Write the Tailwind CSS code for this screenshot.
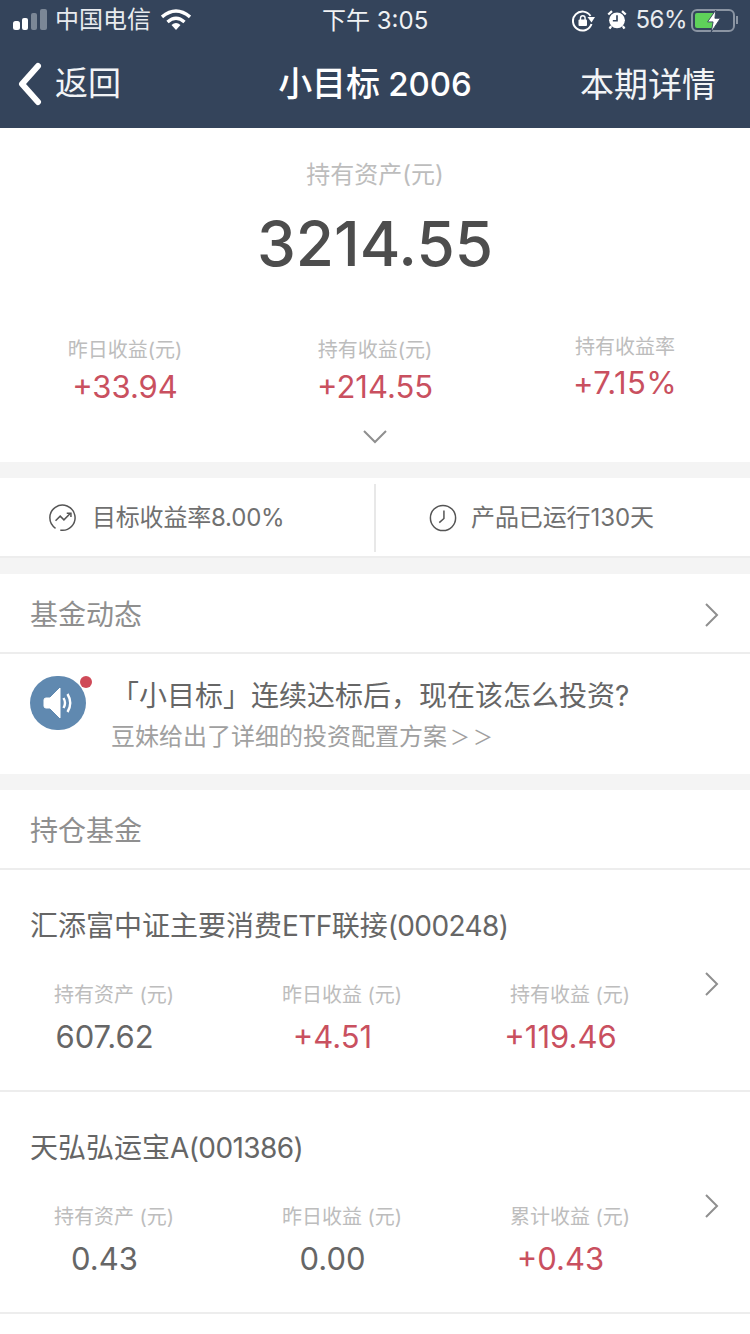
<!DOCTYPE html>
<html lang="zh">
<head>
<meta charset="utf-8">
<script src="https://cdn.jsdelivr.net/npm/@tailwindcss/browser@4"></script>
</head>
<body class="m-0 bg-white">
<div class="w-[750px] h-[1334px] overflow-hidden bg-white font-['Inter','Noto_Sans_CJK_SC',sans-serif]">
  <header class="h-[128px] bg-[#34445b] text-white flex flex-col">
    <div class="h-[40px] relative flex items-center justify-between pl-[13px] pr-[12px] text-[24px] text-[#e8ebef]">
      <div class="flex items-center">
        <svg width="34" height="22" viewBox="0 0 34 22" class="mr-[8px]">
          <rect x="0" y="12" width="7" height="9" rx="2.5" fill="#fff"/>
          <rect x="9" y="9" width="6" height="12" rx="2" fill="#fff"/>
          <rect x="18" y="4" width="6" height="17" rx="2" fill="#7b8796"/>
          <rect x="27" y="0" width="7" height="21" rx="2" fill="#7b8796"/>
        </svg>
        <span>中国电信</span>
        <svg width="30" height="22" viewBox="0 0 30 22" class="ml-[10px]" fill="none" stroke="#fff" stroke-width="3.4">
          <path d="M1 8 Q15 -4 29 8"/><path d="M6.5 13 Q15 5.5 23.5 13"/>
          <path d="M10.5 16 Q15 12 19.5 16 L15 21Z" fill="#fff" stroke="none"/>
        </svg>
      </div>
      <span class="absolute left-[322px] top-[3px] text-[24px] text-[#f0f2f4]">下午 3:05</span>
      <div class="flex items-center">
        <svg width="24" height="22" viewBox="0 0 24 22" fill="none" stroke="#fff" stroke-width="2" class="mr-[11px] mt-[2px]">
          <path d="M19.5 14 A9.5 9.5 0 1 1 18.5 6"/><path d="M15.5 7 L23 7 L19.5 12.5Z" fill="#fff" stroke="none"/>
          <rect x="6.5" y="9.5" width="8.5" height="6.5" rx="1" fill="#fff" stroke="none"/>
          <path d="M8.5 10 V8 a2.3 2.3 0 0 1 4.6 0 V10" stroke-width="1.4"/>
        </svg>
        <svg width="20" height="21" viewBox="0 0 24 24" class="mr-[8px] mt-[-2px]">
          <circle cx="12" cy="13" r="9.5" fill="#fff"/>
          <path d="M12 7 V13.5 H7" fill="none" stroke="#34445b" stroke-width="2"/>
          <path d="M1.5 6 L6 2 M22.5 6 L18 2 M5 20 L3 23 M19 20 L21 23" stroke="#fff" stroke-width="2.8"/>
        </svg>
        <span class="mr-[4px] tracking-[-0.5px]">56%</span>
        <div class="relative w-[44px] h-[23px] border-2 border-[#8b95a3] rounded-[6px] p-[2px]">
          <div class="w-[20px] h-full bg-[#5fd15a] rounded-[2px]"></div>
          <svg width="16" height="22" viewBox="0 0 16 24" class="absolute left-[13px] top-[-1px]"><path d="M10 0 L1 13 H7 L5 24 L15 9 H9Z" fill="#fff" stroke="#34445b" stroke-width="1"/></svg>
        </div>
        <div class="w-[2px] h-[8px] bg-[#8b95a3] ml-[1px]"></div>
      </div>
    </div>
    <div class="flex-1 relative flex items-center justify-between pl-[17px] pr-[34px]">
      <div class="flex items-center">
        <svg width="26" height="44" viewBox="0 0 26 44" fill="none" stroke="#fff" stroke-width="6" stroke-linecap="round" stroke-linejoin="round"><path d="M21 4 L5 22 L21 40"/></svg>
        <span class="text-[33px] ml-[12px] text-[#f2f4f6]">返回</span>
      </div>
      <span class="absolute left-0 right-0 text-center text-[34px] font-medium">小目标<span class="text-[33px] ml-[8px]">2006</span></span>
      <span class="text-[34px] text-[#f2f4f6]">本期详情</span>
    </div>
  </header>

  <section class="h-[334px] flex flex-col items-center">
    <div class="mt-[29px] text-[24px] leading-[36px] text-[#bdbdbd]">持有资产(元)</div>
    <div class="mt-[11px] text-[62px] leading-[80px] font-medium text-[#4d4d4d]">3214.55</div>
    <div class="mt-[51px] w-full grid grid-cols-3 text-center">
      <div><div class="text-[20px] leading-[30px] text-[#bdbdbd]">昨日收益(元)</div><div class="text-[31px] leading-[46px] -mt-[1px] text-[#c9505f]">+33.94</div></div>
      <div><div class="text-[20px] leading-[30px] text-[#bdbdbd]">持有收益(元)</div><div class="text-[31px] leading-[46px] -mt-[1px] text-[#c9505f]">+214.55</div></div>
      <div class="-mt-[3px]"><div class="text-[20px] leading-[30px] text-[#bdbdbd]">持有收益率</div><div class="text-[31px] leading-[46px] -mt-[2px] text-[#c9505f] tracking-[0.4px]">+7.15%</div></div>
    </div>
    <svg width="24" height="14" viewBox="0 0 24 14" fill="none" stroke="#8f8f8f" stroke-width="2" class="mt-[20px]"><path d="M1 1 L12 12 L23 1"/></svg>
  </section>

  <div class="h-[16px] bg-[#f4f4f4]"></div>
  <section class="h-[80px] flex items-center border-b-2 border-[#ededed]">
    <div class="w-[375px] flex items-center pl-[49px] pt-[2px]">
      <svg width="28" height="28" viewBox="0 0 30 30" fill="none" stroke="#555" stroke-width="1.6">
        <path d="M7 26 A13.5 13.5 0 1 1 12 28" />
        <path d="M7 18 L12 13 L16 17 L23 10"/><path d="M19 10 H23.5 V14" />
      </svg>
      <span class="ml-[15px] text-[24px] text-[#707070] tracking-[-0.2px]">目标收益率8.00%</span>
    </div>
    <div class="w-[2px] h-[68px] mt-[2px] bg-[#e8e8e8] ml-[-1px]"></div>
    <div class="flex-1 flex items-center pl-[53px] pt-[2px]">
      <svg width="28" height="28" viewBox="0 0 30 30" fill="none" stroke="#555" stroke-width="1.6">
        <circle cx="15" cy="15" r="13.5"/><path d="M16 7 V15.5 L11 20"/>
      </svg>
      <span class="ml-[14px] text-[24px] text-[#707070] tracking-[-0.1px]">产品已运行130天</span>
    </div>
  </section>
  <div class="h-[16px] bg-[#f4f4f4]"></div>

  <section class="h-[80px] flex items-center justify-between pl-[30px] pr-[30px] pt-[3px] border-b-2 border-[#ededed]">
    <span class="text-[28px] text-[#8f8f8f]">基金动态</span>
    <svg width="16" height="26" viewBox="0 0 16 26" fill="none" stroke="#8f8f8f" stroke-width="2"><path d="M2 2 L13 13 L2 24"/></svg>
  </section>
  <section class="h-[120px] relative flex items-start pl-[30px]">
    <div class="relative mt-[22px] w-[56px] h-[54px] rounded-full bg-[#6089b0] flex items-center justify-center">
      <svg width="30" height="32" viewBox="0 0 30 32"><path d="M1 13 Q1 11 3 11 H7 L17 1 V31 L7 21 H3 Q1 21 1 19Z" fill="#fff" stroke="#fff" stroke-width="1" stroke-linejoin="round"/><path d="M20.5 11 Q23.5 16 20.5 21 M24.5 7 Q30 16 24.5 25" fill="none" stroke="#fff" stroke-width="2.4"/></svg>
      <div class="absolute right-[-6px] top-[0px] w-[12px] h-[12px] rounded-full bg-[#cf4a58]"></div>
    </div>
    <div class="ml-[25px] mt-[22px]">
      <div class="text-[28px] leading-[40px] text-[#666666]">「小目标」连续达标后，现在该怎么投资?</div>
      <div class="text-[24px] leading-[36px] text-[#a0a0a0] mt-[3px]">豆妹给出了详细的投资配置方案<span class="text-[20px] tracking-[3px] ml-[3px]">＞＞</span></div>
    </div>
  </section>
  <div class="h-[16px] bg-[#f4f4f4]"></div>

  <section class="h-[80px] flex items-center px-[30px] pt-[3px] border-b-2 border-[#ededed]">
    <span class="text-[28px] text-[#8f8f8f]">持仓基金</span>
  </section>

  <section class="h-[222px] relative border-b-2 border-[#ededed] pt-[36px]">
    <div class="pl-[30px] text-[28px] leading-[40px] text-[#666666]">汇添富中证主要消费<span class="tracking-[-0.6px]">ETF</span>联接<span class="tracking-[-0.6px]">(000248)</span></div>
    <div class="mt-[34px] grid grid-cols-[228px_228px_228px]">
      <div class="text-center"><div class="text-[20px] leading-[30px] text-[#bdbdbd]">持有资产 (元)</div><div class="text-[31px] leading-[44px] mt-[5px] text-[#666666] pr-[19px]">607.62</div></div>
      <div class="text-center"><div class="text-[20px] leading-[30px] text-[#bdbdbd]">昨日收益 (元)</div><div class="text-[31px] leading-[44px] mt-[5px] text-[#c9505f] pr-[19px]">+4.51</div></div>
      <div class="text-center"><div class="text-[20px] leading-[30px] text-[#bdbdbd]">持有收益 (元)</div><div class="text-[31px] leading-[44px] mt-[5px] text-[#c9505f] pr-[19px]">+119.46</div></div>
    </div>
    <svg width="16" height="26" viewBox="0 0 16 26" fill="none" stroke="#8f8f8f" stroke-width="2" class="absolute right-[30px] top-[101px]"><path d="M2 2 L13 13 L2 24"/></svg>
  </section>

  <section class="h-[222px] relative border-b-2 border-[#ededed] pt-[36px]">
    <div class="pl-[30px] text-[28px] leading-[40px] text-[#666666]">天弘弘运宝<span class="tracking-[-0.6px]">A(001386)</span></div>
    <div class="mt-[34px] grid grid-cols-[228px_228px_228px]">
      <div class="text-center"><div class="text-[20px] leading-[30px] text-[#bdbdbd]">持有资产 (元)</div><div class="text-[31px] leading-[44px] mt-[5px] text-[#666666] pr-[19px]">0.43</div></div>
      <div class="text-center"><div class="text-[20px] leading-[30px] text-[#bdbdbd]">昨日收益 (元)</div><div class="text-[31px] leading-[44px] mt-[5px] text-[#666666] pr-[19px]">0.00</div></div>
      <div class="text-center"><div class="text-[20px] leading-[30px] text-[#bdbdbd]">累计收益 (元)</div><div class="text-[31px] leading-[44px] mt-[5px] text-[#c9505f] pr-[19px]">+0.43</div></div>
    </div>
    <svg width="16" height="26" viewBox="0 0 16 26" fill="none" stroke="#8f8f8f" stroke-width="2" class="absolute right-[30px] top-[101px]"><path d="M2 2 L13 13 L2 24"/></svg>
  </section>
</div>
</body>
</html>
